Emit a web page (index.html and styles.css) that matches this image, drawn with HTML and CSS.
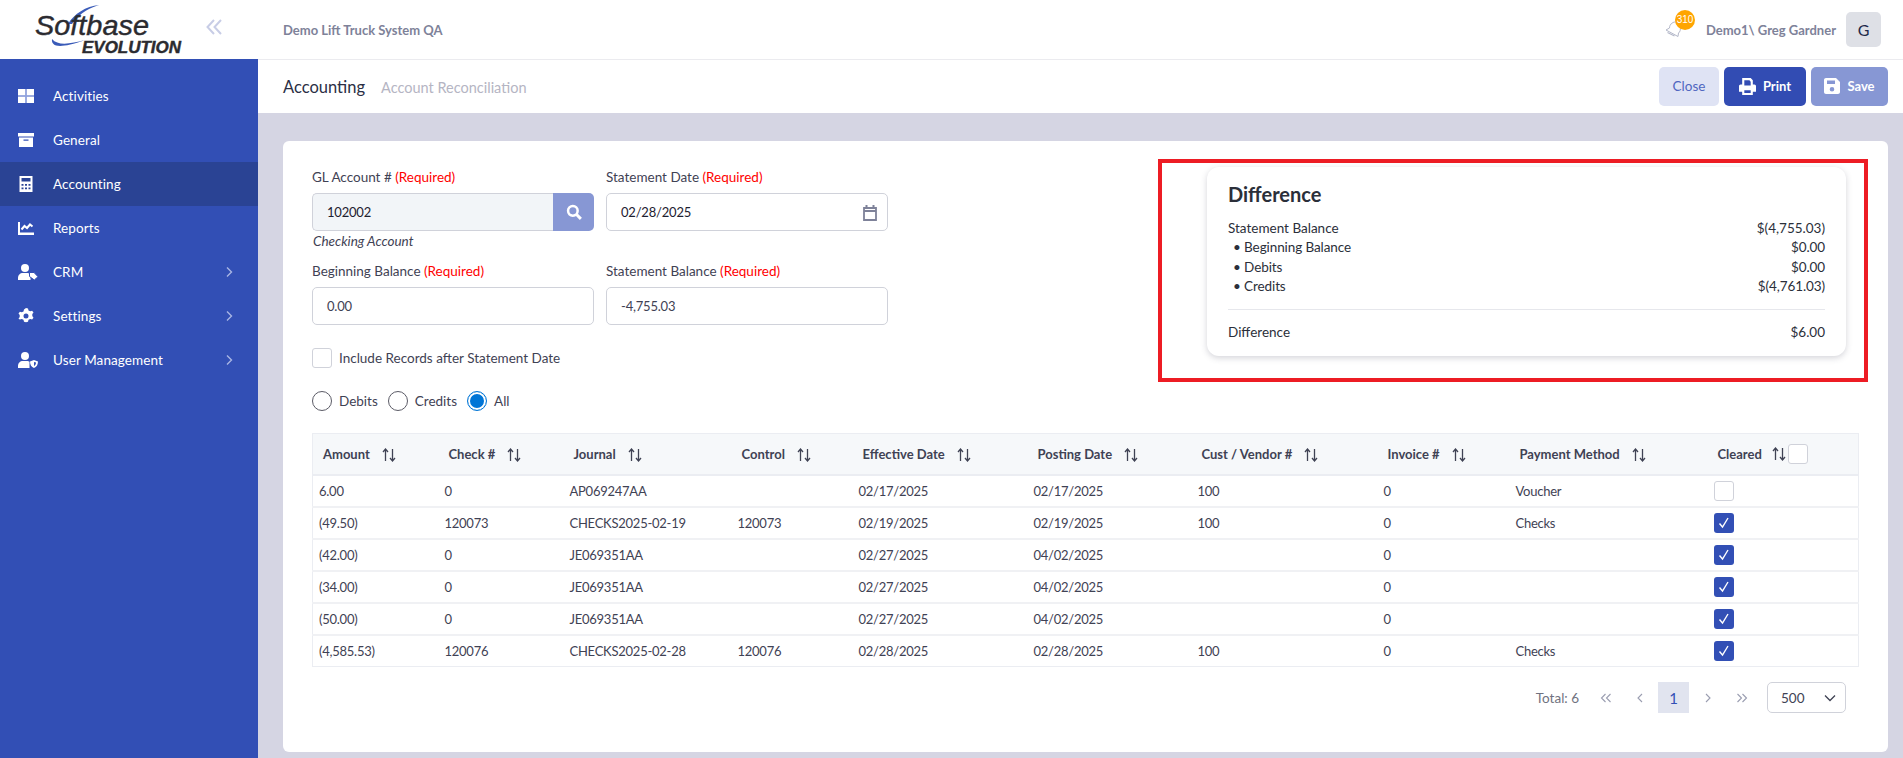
FILE: index.html
```html
<!DOCTYPE html>
<html lang="en">
<head>
<meta charset="utf-8">
<title>Account Reconciliation</title>
<link rel="stylesheet" href="styles.css">
</head>
<body>
<svg class="defs" width="0" height="0" aria-hidden="true">
  <symbol id="sort" viewBox="0 0 14 14"><path d="M3.500 13V1.500M1 4l2.500-3L6 4M10.500 1v11.500M8 10l2.500 3 2.500-3" fill="none" stroke="currentColor" stroke-width="1.300"/></symbol>
  <symbol id="check" viewBox="0 0 20 20"><rect width="20" height="20" rx="3" fill="#324fb5"/><path d="M5.500 10.500l3 3.500 5.500-9" fill="none" stroke="#fff" stroke-width="1.400"/></symbol>
  <symbol id="chev" viewBox="0 0 8 12"><path d="M2 1.500L6.500 6 2 10.500" fill="none" stroke="currentColor" stroke-width="1.400"/></symbol>
</svg>
<div class="app">
  <aside class="sidebar">
    <div class="brand">
      <svg class="logo" width="200" height="59" viewBox="0 0 200 59">
        <path d="M68 24C74 14 86 6 99 5 92 7 80 12 72 24Z" fill="#3a5bb8"/>
        <path d="M52 39C51 47 60 49 85 40 70 44 58 46 52 39Z" fill="#3a5bb8"/>
        <text class="logo-main" x="35" y="35" textLength="114" lengthAdjust="spacingAndGlyphs">Softbase</text>
        <text class="logo-sub" x="82" y="53" textLength="99" lengthAdjust="spacingAndGlyphs">EVOLUTION</text>
      </svg>
      <svg class="collapse" width="16" height="16" viewBox="0 0 16 16"><path d="M8 1L1.500 8 8 15M15 1L8.500 8l6.500 7" fill="none" stroke="#c8cde6" stroke-width="2"/></svg>
    </div>
    <nav class="nav">
      <a class="nav-item"><svg class="nav-icon" viewBox="0 0 16 16"><path d="M0 1h7.500v6.500H0zM8.500 1H16v6.500H8.500zM0 8.500h7.500V15H0zM8.500 8.500H16V15H8.500z" fill="#fff"/><path d="M8 1v14M0 8h16" stroke="#9fb0e6" stroke-width="1"/></svg><span>Activities</span></a>
      <a class="nav-item"><svg class="nav-icon" viewBox="0 0 16 16"><path d="M0 1h16v3.500H0zM1 5.500h14V15H1zM5.500 7.500v1.200h5V7.500z" fill="#fff" fill-rule="evenodd"/></svg><span>General</span></a>
      <a class="nav-item active"><svg class="nav-icon" viewBox="0 0 16 16"><path d="M1.500 0h13v16h-13zM3.500 2v3.500h9V2zM3.500 8v1.800h2V8zM7 8v1.800h2V8zM10.500 8v1.800h2V8zM3.500 11.500v1.800h2v-1.800zM7 11.500v1.800h2v-1.800zM10.500 11.500v1.800h2v-1.800z" fill="#fff" fill-rule="evenodd"/></svg><span>Accounting</span></a>
      <a class="nav-item"><svg class="nav-icon" viewBox="0 0 16 16"><path d="M0 2h2v10.500h14V15H0z" fill="#fff"/><path d="M3.500 9.500L6.500 6l2.500 2 3-3.500 2.500 2" fill="none" stroke="#fff" stroke-width="2"/></svg><span>Reports</span></a>
      <a class="nav-item"><svg class="nav-icon wide" viewBox="0 0 20 16"><circle cx="7" cy="4" r="4" fill="#fff"/><path d="M0 16v-2c0-3 2-5 5-5h4c1.500 0 2.500.5 3.500 1.500V16z" fill="#fff"/><path d="M11.500 8.500h4.500l4 4.200-3.700 3.300-4.800-3.500z" fill="#fff" stroke="#324fb5" stroke-width="1"/></svg><span>CRM</span><svg class="nav-chev"><use href="#chev"/></svg></a>
      <a class="nav-item"><svg class="nav-icon" viewBox="0 0 16 16"><path d="M8 0l2 .4.500 2 1.700.9 1.900-.6 1.400 1.700-1.200 1.700v2l1.200 1.700-1.400 1.700-1.900-.6-1.700.9-.5 2-2 .4-2-.4-.5-2-1.700-.9-1.900.6L.5 10.800l1.200-1.700v-2L.5 5.400l1.400-1.700 1.900.6 1.700-.9.500-2zM8 5.500a2.500 2.500 0 100 5 2.500 2.500 0 000-5z" fill="#fff" fill-rule="evenodd"/></svg><span>Settings</span><svg class="nav-chev"><use href="#chev"/></svg></a>
      <a class="nav-item"><svg class="nav-icon wide" viewBox="0 0 20 16"><circle cx="7" cy="4" r="4" fill="#fff"/><path d="M0 16v-2c0-3 2-5 5-5h4c1 0 2 .3 2.500.8V16z" fill="#fff"/><path d="M16 8l4 1.500c0 3.500-1.500 5.500-4 6.500-2.500-1-4-3-4-6.500zM16 10v4c1-.5 2-1.800 2-3.500z" fill="#fff" fill-rule="evenodd"/></svg><span>User Management</span><svg class="nav-chev"><use href="#chev"/></svg></a>
    </nav>
  </aside>
  <div class="content">
    <header class="topbar">
      <div class="system">Demo Lift Truck System QA</div>
      <div class="user">
        <div class="bell">
          <svg class="bell-icon" width="20" height="20" viewBox="0 0 20 20"><path d="M1 12l12 6.500.5-3.500c1.500-1 2.500-3.500 1.500-6.500C14 5 11 3 8 4.500 5 6 4.500 8.500 4.500 10z" fill="#fff" stroke="#b4b8c9" stroke-width="1"/><path d="M2.500 14.500l7 3.500" stroke="#b4b8c9" stroke-width="1.200"/></svg>
          <span class="badge">310</span>
        </div>
        <span class="user-name">Demo1\ Greg Gardner</span>
        <span class="avatar">G</span>
      </div>
    </header>
    <div class="subbar">
      <div class="crumbs"><span class="crumb-main">Accounting</span><span class="crumb-sub">Account Reconciliation</span></div>
      <div class="actions">
        <button class="btn btn-close">Close</button>
        <button class="btn btn-print"><svg width="17" height="17" viewBox="0 0 16 16"><path d="M3 0h8l2 2v4h1.500c.8 0 1.500.7 1.500 1.500V13h-3v3H3v-3H0V7.500C0 6.700.7 6 1.500 6H3zM5 2v5h6V3.500L9.800 2zM5 11.500V14h6v-2.500z" fill="#fff" fill-rule="evenodd"/></svg>Print</button>
        <button class="btn btn-save"><svg width="16" height="16" viewBox="0 0 16 16"><path d="M2 0h10l4 4v10c0 1.100-.9 2-2 2H2c-1.100 0-2-.9-2-2V2C0 .9.900 0 2 0zM3 2.500V6h8V2.500zM8 9a2.300 2.300 0 100 4.600A2.300 2.300 0 008 9z" fill="#fff" fill-rule="evenodd"/></svg>Save</button>
      </div>
    </div>
    <main class="main">
      <section class="card">
        <div class="top">
          <div class="form">
            <div class="form-grid">
              <div class="field">
                <label class="label">GL Account # <em class="req">(Required)</em></label>
                <div class="input-group"><span class="input readonly">102002</span><button class="search"><svg width="16" height="16" viewBox="0 0 14 14"><circle cx="6" cy="6" r="4.200" fill="none" stroke="#fff" stroke-width="2.200"/><path d="M9 9l4 4" stroke="#fff" stroke-width="2.600"/></svg></button></div>
                <div class="hint">Checking Account</div>
              </div>
              <div class="field">
                <label class="label">Statement Date <em class="req">(Required)</em></label>
                <div class="input date"><span class="dark">02/28/2025</span><svg width="14" height="17" viewBox="0 0 14 17"><path d="M1 4h12v12H1zM1 7h12" fill="none" stroke="#7e8299" stroke-width="1.800"/><path d="M3.500 1v3M10.500 1v3" stroke="#7e8299" stroke-width="2"/></svg></div>
              </div>
              <div class="field">
                <label class="label">Beginning Balance <em class="req">(Required)</em></label>
                <div class="input">0.00</div>
              </div>
              <div class="field">
                <label class="label">Statement Balance <em class="req">(Required)</em></label>
                <div class="input">-4,755.03</div>
              </div>
            </div>
            <div class="include"><span class="box"></span><span>Include Records after Statement Date</span></div>
            <div class="radios">
              <span class="radio"></span><span class="radio-text">Debits</span>
              <span class="radio"></span><span class="radio-text">Credits</span>
              <span class="radio on"></span><span class="radio-text">All</span>
            </div>
          </div>
          <div class="diff-wrap">
            <div class="diff">
              <h2 class="diff-title">Difference</h2>
              <div class="diff-row"><span>Statement Balance</span><span>$(4,755.03)</span></div>
              <div class="diff-row sub"><span>• Beginning Balance</span><span>$0.00</span></div>
              <div class="diff-row sub"><span>• Debits</span><span>$0.00</span></div>
              <div class="diff-row sub"><span>• Credits</span><span>$(4,761.03)</span></div>
              <hr class="diff-line">
              <div class="diff-row"><span>Difference</span><span>$6.00</span></div>
            </div>
            <div class="annotation"></div>
          </div>
        </div>
        <table class="grid">
          <colgroup><col class="c1"><col class="c2"><col class="c3"><col class="c4"><col class="c5"><col class="c6"><col class="c7"><col class="c8"><col class="c9"><col class="c10"></colgroup>
          <thead>
            <tr>
              <th>Amount<svg class="sort"><use href="#sort"/></svg></th>
              <th>Check #<svg class="sort"><use href="#sort"/></svg></th>
              <th>Journal<svg class="sort"><use href="#sort"/></svg></th>
              <th>Control<svg class="sort"><use href="#sort"/></svg></th>
              <th>Effective Date<svg class="sort"><use href="#sort"/></svg></th>
              <th>Posting Date<svg class="sort"><use href="#sort"/></svg></th>
              <th>Cust / Vendor #<svg class="sort"><use href="#sort"/></svg></th>
              <th>Invoice #<svg class="sort"><use href="#sort"/></svg></th>
              <th>Payment Method<svg class="sort"><use href="#sort"/></svg></th>
              <th><div class="th-clear">Cleared<svg class="sort tight"><use href="#sort"/></svg><span class="box"></span></div></th>
            </tr>
          </thead>
          <tbody>
            <tr><td>6.00</td><td>0</td><td>AP069247AA</td><td></td><td>02/17/2025</td><td>02/17/2025</td><td>100</td><td>0</td><td>Voucher</td><td><span class="box cell-box"></span></td></tr>
            <tr><td>(49.50)</td><td>120073</td><td>CHECKS2025-02-19</td><td>120073</td><td>02/19/2025</td><td>02/19/2025</td><td>100</td><td>0</td><td>Checks</td><td><svg class="tick"><use href="#check"/></svg></td></tr>
            <tr><td>(42.00)</td><td>0</td><td>JE069351AA</td><td></td><td>02/27/2025</td><td>04/02/2025</td><td></td><td>0</td><td></td><td><svg class="tick"><use href="#check"/></svg></td></tr>
            <tr><td>(34.00)</td><td>0</td><td>JE069351AA</td><td></td><td>02/27/2025</td><td>04/02/2025</td><td></td><td>0</td><td></td><td><svg class="tick"><use href="#check"/></svg></td></tr>
            <tr><td>(50.00)</td><td>0</td><td>JE069351AA</td><td></td><td>02/27/2025</td><td>04/02/2025</td><td></td><td>0</td><td></td><td><svg class="tick"><use href="#check"/></svg></td></tr>
            <tr><td>(4,585.53)</td><td>120076</td><td>CHECKS2025-02-28</td><td>120076</td><td>02/28/2025</td><td>02/28/2025</td><td>100</td><td>0</td><td>Checks</td><td><svg class="tick"><use href="#check"/></svg></td></tr>
          </tbody>
        </table>
        <div class="pager">
          <span class="total">Total: 6</span>
          <span class="pg"><svg width="12" height="10" viewBox="0 0 12 10"><path d="M5.500 1L1.500 5l4 4M10.500 1l-4 4 4 4" fill="none" stroke="currentColor" stroke-width="1.100"/></svg></span>
          <span class="pg"><svg width="6" height="10" viewBox="0 0 6 10"><path d="M5 1L1 5l4 4" fill="none" stroke="currentColor" stroke-width="1.100"/></svg></span>
          <span class="pg current">1</span>
          <span class="pg"><svg width="6" height="10" viewBox="0 0 6 10"><path d="M1 1l4 4-4 4" fill="none" stroke="currentColor" stroke-width="1.100"/></svg></span>
          <span class="pg"><svg width="12" height="10" viewBox="0 0 12 10"><path d="M1.500 1l4 4-4 4M6.500 1l4 4-4 4" fill="none" stroke="currentColor" stroke-width="1.100"/></svg></span>
          <span class="size">500<svg width="12" height="8" viewBox="0 0 12 8"><path d="M1 1.500l5 5 5-5" fill="none" stroke="#3f4254" stroke-width="1.300"/></svg></span>
        </div>
      </section>
    </main>
  </div>
</div>
</body>
</html>
```

FILE: styles.css
```css
* { box-sizing: border-box; }
html, body { margin: 0; padding: 0; height: 100%; overflow: hidden; }
body { font-family: Lato, "Noto Sans", sans-serif; font-size: 13px; color: #3f4254; background: #d5d5e3; }
.defs { position: absolute; }
.app { display: flex; height: 758px; }

.sidebar { width: 258px; flex: none; background: #324fb5; }
.brand { height: 59px; background: #fff; display: flex; align-items: center; }
.logo { flex: none; }
.logo-main { font: italic 400 27px "Liberation Sans", sans-serif; fill: #2b2b30; stroke: #2b2b30; stroke-width: .4px; }
.logo-sub { font: italic 700 16px "Liberation Sans", sans-serif; fill: #2b2b30; stroke: #2b2b30; stroke-width: .4px; }
.collapse { margin-left: 6px; margin-top: -6px; }
.nav { padding-top: 15px; }
.nav-item { height: 44px; display: flex; align-items: center; padding-left: 18px; color: #fff; font-size: 13.5px; letter-spacing: .1px; }
.nav-item.active { background: #2a4394; }
.nav-item span { flex: 1; }
.nav-icon { width: 16px; height: 16px; margin-right: 19px; flex: none; }
.nav-icon.wide { width: 20px; margin-right: 15px; }
.nav-chev { width: 8px; height: 12px; margin-right: 25px; color: #a9b6e4; }

.content { flex: 1; display: flex; flex-direction: column; min-width: 0; }
.topbar { height: 60px; flex: none; background: #fff; border-bottom: 1px solid #ebebef; display: flex; align-items: center; justify-content: space-between; padding: 0 22px 0 25px; }
.system { font-size: 13px; font-weight: 700; color: #7e8299; }
.user { display: flex; align-items: center; }
.bell { position: relative; width: 30px; height: 36px; margin-right: 12px; }
.bell-icon { position: absolute; left: 1px; top: 6px; }
.badge { position: absolute; left: 11px; top: -2px; width: 20px; height: 20px; border-radius: 50%; background: #ffa500; color: #fff; font-size: 10px; line-height: 20px; text-align: center; font-family: "Liberation Sans", sans-serif; }
.user-name { font-size: 13px; font-weight: 700; color: #7e8299; margin-right: 10px; }
.avatar { width: 35px; height: 35px; border-radius: 5px; background: #dee0e6; color: #1e2a4a; display: flex; align-items: center; justify-content: center; font-size: 16px; }

.subbar { height: 53px; flex: none; background: #fff; display: flex; align-items: center; justify-content: space-between; padding: 0 15px 0 25px; }
.crumb-main { font-size: 16.5px; color: #2b2f45; }
.crumb-sub { font-size: 14.5px; color: #b5b5c3; margin-left: 16px; }
.actions { display: flex; gap: 5px; margin-top: -1px; }
.btn { height: 39px; border: 0; border-radius: 5px; font: 700 13px Lato, sans-serif; color: #fff; display: flex; align-items: center; justify-content: center; gap: 7px; padding: 0; }
.btn-close { width: 60px; background: #dfe3f4; color: #4f66c0; font-weight: 400; font-size: 13.5px; }
.btn-print { width: 82px; background: #324cb3; }
.btn-save { width: 77px; background: #8797d4; }

.main { flex: 1; padding: 28px 15px 6px 25px; min-height: 0; }
.card { height: 611px; background: #fff; border-radius: 6px; padding: 26px 30px 0 29px; }
.top { display: flex; justify-content: space-between; align-items: flex-start; height: 244px; }
.form { width: 576px; flex: none; }
.form-grid { display: grid; grid-template-columns: 282px 282px; column-gap: 12px; row-gap: 10px; }
.label { display: block; line-height: 20px; margin-bottom: 6px; font-size: 13.5px; }
.req { font-style: normal; color: #f00; }
.input { height: 38px; border: 1px solid #d0d2da; border-radius: 5px; display: flex; align-items: center; padding: 0 14px; background: #fff; font-size: 13px; letter-spacing: -.2px; }
.dark { color: #1e2130; }
.input-group { display: flex; }
.input.readonly { flex: 1; background: #f2f5f8; border-right: 0; border-radius: 5px 0 0 5px; color: #1e2130; }
.search { width: 41px; height: 38px; border: 0; padding: 0; background: #8797d4; border-radius: 0 5px 5px 0; display: flex; align-items: center; justify-content: center; }
.date { justify-content: space-between; padding-right: 10px; }
.hint { font-style: italic; line-height: 20px; height: 20px; padding-left: 1px; font-size: 13.5px; }
.box { display: inline-block; width: 20px; height: 20px; border: 1px solid #d0d2da; border-radius: 3px; background: #fff; flex: none; }
.include { display: flex; align-items: center; gap: 7px; margin-top: 23px; font-size: 13.5px; }
.radios { display: flex; align-items: center; margin-top: 23px; font-size: 13.5px; }
.radio { width: 20px; height: 20px; border-radius: 50%; border: 1px solid #5b5b66; background: #fff; flex: none; }
.radio.on { border: 1px solid #0075d6; box-shadow: inset 0 0 0 2px #fff, inset 0 0 0 10px #0075d6; }
.radio-text { margin: 0 10px 0 7px; }

.diff-wrap { position: relative; margin-right: 12px; width: 639px; }
.diff { background: #fff; border-radius: 12px; box-shadow: 0 2px 6px rgba(60, 60, 80, .22); padding: 15px 21px 15px 21px; height: 189px; color: #2b2f3a; }
.diff-title { margin: 0 0 13px; font-size: 20px; line-height: 24px; font-weight: 700; color: #2b2f3a; }
.diff-row { display: flex; justify-content: space-between; line-height: 19.3px; font-size: 13.5px; }
.diff-row.sub { padding-left: 5px; letter-spacing: -.1px; }
.diff-line { border: 0; border-top: 1px solid #e6e7ec; margin: 13px 0 13px; }
.annotation { position: absolute; left: -49px; right: -22px; top: -8px; bottom: -26px; border: 4px solid #ed1c24; pointer-events: none; }

.grid { border-collapse: collapse; table-layout: fixed; width: 1546px; margin-top: 22px; }
.c1 { width: 126px; } .c2 { width: 125px; } .c3 { width: 168px; } .c4 { width: 121px; } .c5 { width: 175px; }
.c6 { width: 164px; } .c7 { width: 186px; } .c8 { width: 132px; } .c9 { width: 198px; } .c10 { width: 151px; }
.grid th { height: 41px; background: #f6f8fa; border-top: 1px solid #ebedf2; border-bottom: 2px solid #ebedf2; text-align: left; padding: 0 0 0 10px; font-weight: 700; font-size: 13px; color: #3f4254; white-space: nowrap; }
.grid th:first-child, .grid td:first-child { border-left: 1px solid #ebedf2; }
.grid th:last-child, .grid td:last-child { border-right: 1px solid #ebedf2; }
.grid td { height: 32px; border-bottom: 2px solid #f0f1f4; padding: 0 0 0 6px; font-size: 13px; letter-spacing: -.25px; color: #3f4254; white-space: nowrap; }
.grid tbody tr:last-child td { border-bottom: 1px solid #ebedf2; }
.sort { width: 14px; height: 14px; margin-left: 12px; vertical-align: -3px; color: #3f4254; }
.sort.tight { margin: 0 2px 0 10px; vertical-align: 0; }
.th-clear { display: flex; align-items: center; }
.cell-box, .tick { display: block; width: 20px; height: 20px; margin-top: 1px; }
.pager { display: flex; align-items: center; margin-top: 15px; height: 31px; justify-content: flex-end; padding-right: 12px; color: #6f7280; }
.total { margin-right: 8px; font-size: 13.5px; }
.pg { width: 31px; height: 31px; display: flex; align-items: center; justify-content: center; color: #9a9db0; margin-left: 3px; }
.pg.current { background: #e1e4ef; color: #324fb5; font-size: 15px; }
.size { width: 79px; height: 31px; border: 1px solid #d0d2da; border-radius: 5px; margin-left: 10px; display: flex; align-items: center; justify-content: space-between; padding: 0 9px 0 13px; color: #3f4254; font-size: 13.5px; }
```
